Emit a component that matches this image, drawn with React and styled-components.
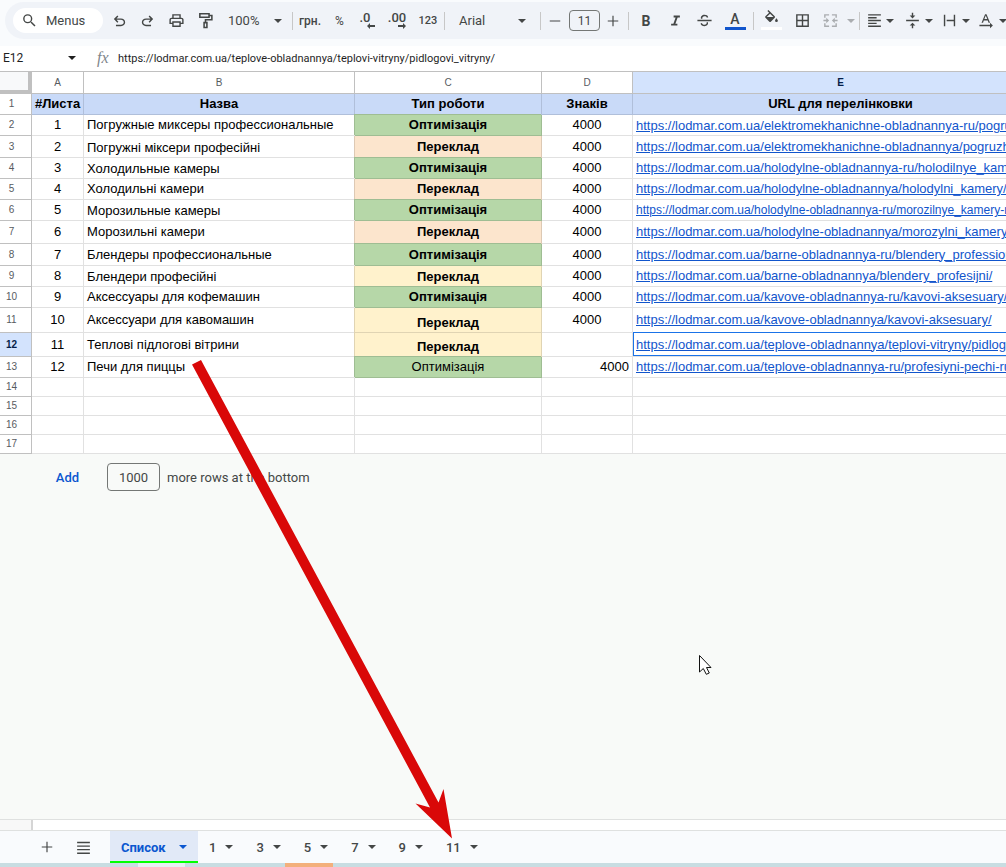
import styled, { createGlobalStyle, css } from 'styled-components';

const GlobalStyle = createGlobalStyle`
  * {
    box-sizing: border-box;
  }

  body {
    margin: 0;
    overflow: hidden;
    background: #f8faf8;
    color: #444746;
    font-family: Roboto, "Liberation Sans", sans-serif;
    font-size: 13px;
  }

  button, input, select {
    font: inherit;
    color: inherit;
  }
`;

const Page = styled.div`
  position: relative;
  display: flex;
  flex-direction: column;
  height: 100vh;
  overflow: hidden;
`;

const ToolbarArea = styled.header`
  padding: 2px 0 7px 5px;
  background: #f9fbfd;
`;

const Toolbar = styled.div`
  display: flex;
  align-items: center;
  height: 37px;
  padding-left: 8px;
  border-radius: 19px 0 0 19px;
  background: #f0f3f8;
  white-space: nowrap;
  overflow: hidden;
`;

const SearchButton = styled.button`
  display: flex;
  align-items: center;
  gap: 8px;
  flex: none;
  width: 90px;
  height: 25px;
  margin-right: 2px;
  padding: 0 0 0 8px;
  border: 0;
  border-radius: 13px;
  background: #fff;
`;

const ToolButton = styled.button`
  display: flex;
  align-items: center;
  justify-content: center;
  flex: none;
  width: ${({ $width }) => $width || 28}px;
  height: 28px;
  padding: 0;
  border: 0;
  background: none;
  font-size: ${({ $size }) => $size || 13}px;
  font-weight: ${({ $weight }) => $weight || 400};
  opacity: ${({ disabled }) => (disabled ? 0.4 : 1)};
`;

const MenuButton = styled(ToolButton)`
  justify-content: space-between;
  padding: 0 ${({ $pad }) => $pad || 4}px;
`;

const Separator = styled.span`
  flex: none;
  width: 1px;
  height: 18px;
  margin: 0 ${({ $gap }) => $gap || 0}px;
  background: #c7c7c7;
`;

const FontSizeInput = styled.input`
  flex: none;
  width: 31px;
  height: 21px;
  padding: 0;
  border: 1px solid #747775;
  border-radius: 4px;
  background: transparent;
  font-size: 12px;
  text-align: center;
`;

const FormulaBar = styled.div`
  display: flex;
  align-items: center;
  height: 25px;
  padding-bottom: 1px;
  background: #fff;
  color: #1f1f1f;
  font-size: 12px;
`;

const NameBox = styled.button`
  display: flex;
  align-items: center;
  justify-content: space-between;
  width: 80px;
  padding: 0 4px 0 3px;
  border: 0;
  background: none;
`;

const FxLabel = styled.span`
  width: 38px;
  padding-left: 17px;
  color: #80868b;
  font: italic 16px "Liberation Serif", serif;
`;

const FormulaInput = styled.input`
  flex: 1;
  padding: 0;
  border: 0;
  background: none;
  font-size: 11px;
`;

const SheetArea = styled.main`
  flex: 1;
  min-height: 0;
  overflow: hidden;
`;

const Sheet = styled.table`
  width: 1049px;
  border-collapse: separate;
  border-spacing: 0;
  border-top: 1px solid #c0c0c0;
  table-layout: fixed;
  background: #fff;
  color: #000;
  font-family: "Liberation Sans", Arial, sans-serif;
`;

const Corner = styled.td`
  padding: 0;
  border-right: 4px solid #c0c0c0;
  border-bottom: 4px solid #c0c0c0;
  background: #f8f9fa;
`;

const headerCell = css`
  padding: 0;
  border-right: 1px solid #c0c0c0;
  border-bottom: 1px solid #c0c0c0;
  background: ${({ $active }) => ($active ? '#d3e3fd' : '#fff')};
  color: ${({ $active }) => ($active ? '#041e49' : '#575b5f')};
  font-size: 10px;
  font-weight: ${({ $active }) => ($active ? 700 : 400)};
  line-height: 12px;
`;

const ColumnHeader = styled.th`
  ${headerCell}
`;

const RowHeader = styled.th`
  ${headerCell}
  padding-right: 8px;
`;

const Row = styled.tr`
  height: ${({ $height }) => $height}px;
`;

const fills = {
  header: { background: '#c9daf8', line: '#b0bfda' },
  green: { background: '#b6d7a8', line: '#9fbd93' },
  peach: { background: '#fce5cd', line: '#ddc9b4' },
  yellow: { background: '#fff2cc', line: '#e0d4b3' },
};

const Cell = styled.td`
  padding: 0 3px ${({ $bottom }) => ($bottom ? 2 : 1)}px;
  overflow: hidden;
  border-right: 1px solid ${({ $fill }) => ($fill ? fills[$fill].line : '#e1e1e1')};
  border-bottom: 1px solid ${({ $fill }) => ($fill ? fills[$fill].line : '#e1e1e1')};
  background: ${({ $fill }) => ($fill ? fills[$fill].background : '#fff')};
  box-shadow: ${({ $fill }) => {
    if (!$fill || $fill === 'header') return 'none';
    return `-1px ${$fill === 'green' ? -1 : 0}px ${fills[$fill].line}`;
  }};
  font-size: ${({ $small }) => ($small ? 12 : 13)}px;
  font-weight: ${({ $bold }) => ($bold ? 700 : 400)};
  line-height: 15px;
  text-align: ${({ $align }) => $align || 'center'};
  vertical-align: ${({ $bottom }) => ($bottom ? 'bottom' : 'middle')};
  white-space: nowrap;

  ${({ $selected }) => $selected && css`
    box-shadow: inset 1px 0 #1a73e8, inset 0 -1px #1a73e8, 0 -1px #1a73e8;
  `}
`;

const CellLink = styled.a`
  color: #1155cc;
  text-decoration: underline;
`;

const AddRows = styled.form`
  display: flex;
  align-items: center;
  height: 46px;
  padding-left: 47px;
`;

const AddButton = styled.button`
  width: 41px;
  margin-right: 19px;
  padding: 0;
  border: 0;
  background: none;
  color: #0b57d0;
  font-weight: 500;
`;

const RowCount = styled.input`
  width: 53px;
  height: 28px;
  margin-right: 7px;
  padding: 0;
  border: 1px solid #747775;
  border-radius: 4px;
  background: transparent;
  text-align: center;
`;

const ScrollTrack = styled.div`
  height: 12px;
  padding-left: 31px;
  border: solid #dfe1e0;
  border-width: 1px 0;
  background: #f8f8f8;

  &::before {
    content: "";
    display: block;
    height: 10px;
    border-left: 2px solid #d5d5d5;
    background: #fff;
  }
`;

const TabBar = styled.nav`
  display: flex;
  align-items: center;
  height: 32px;
  padding-left: 28px;
  background: #f9fbfd;
`;

const Tab = styled.button`
  display: flex;
  align-items: center;
  gap: 9px;
  height: 32px;
  padding: ${({ $active }) => ($active ? '0 11px' : '0 12px 0 11px')};
  border: 0;
  background: ${({ $active }) => ($active ? '#e1e9f7' : 'transparent')};
  color: ${({ $active }) => ($active ? '#0b57d0' : '#444746')};
  font-weight: ${({ $active }) => ($active ? 700 : 500)};
  box-shadow: ${({ $active }) => ($active ? 'inset 0 -2px #00ff00' : 'none')};
`;

const TabName = styled.span`
  min-width: ${({ $active }) => ($active ? 49 : 7)}px;
  text-align: left;
`;

const Taskbar = styled.footer`
  display: flex;
  height: 4px;
  padding-left: 138px;
  background: #c8dde2;
`;

const TaskItem = styled.span`
  width: ${({ $width }) => $width}px;
  margin-right: 100px;
  background: ${({ $color }) => $color};
`;

const Annotation = styled.svg`
  position: absolute;
  left: 0;
  top: 0;
  pointer-events: none;
`;

const Arrow = styled.svg`
  flex: none;
  width: 8px;
  height: 4px;
  fill: currentColor;
`;

function Caret() {
  return <Arrow viewBox="0 0 8 4"><path d="M0 0h8L4 4z" /></Arrow>;
}

const icons = {
  search: <path d="M15.5 14h-.79l-.28-.27A6.47 6.47 0 0 0 16 9.5 6.5 6.5 0 1 0 9.5 16c1.61 0 3.09-.59 4.23-1.57l.27.28v.79l5 4.99L20.49 19zm-6 0a4.5 4.5 0 1 1 0-9 4.5 4.5 0 0 1 0 9z" />,
  undo: <path d="M7 20v-2h7.1c1.05 0 1.96-.33 2.74-1s1.16-1.5 1.16-2.5-.39-1.83-1.16-2.5S15.15 11 14.1 11H7.8l2.6 2.6L9 15l-5-5 5-5 1.4 1.4L7.8 9h6.3c1.62 0 3 .52 4.16 1.57C19.42 11.62 20 12.93 20 14.5s-.58 2.88-1.74 3.93C17.1 19.48 15.72 20 14.1 20z" />,
  redo: <path d="M9.9 20c-1.62 0-3-.52-4.16-1.57C4.58 17.38 4 16.07 4 14.5s.58-2.88 1.74-3.93C6.9 9.52 8.28 9 9.9 9h6.3l-2.6-2.6L15 5l5 5-5 5-1.4-1.4 2.6-2.6H9.9c-1.05 0-1.96.33-2.74 1S6 13.500 6 14.500s.39 1.830 1.160 2.500S8.850 18 9.900 18H17v2z" />,
  print: <path d="M19 8h-1V3H6v5H5c-1.660 0-3 1.340-3 3v6h4v4h12v-4h4v-6c0-1.660-1.340-3-3-3zM8 5h8v3H8zm8 14H8v-4h8zm2-4v-2H6v2H4v-4c0-.55.45-1 1-1h14c.55 0 1 .45 1 1v4z" />,
  paint: <path d="M4 2.500h13v5H4zM17 5h4v6h-9v4M10 15h4v7h-4z" fill="none" stroke="currentColor" strokeWidth="2.200" />,
  strike: <path d="M2 11h20v2H2zM7 9.500C6.200 6.500 8.500 4 12 4c2.700 0 4.500 1.200 5.300 3.300l-1.900.8C14.900 6.700 13.700 6 12 6c-2.200 0-3.400 1.200-3 3.500zM17 14.500c.7 3.200-1.500 5.500-5 5.500-2.900 0-4.900-1.400-5.600-3.800l1.900-.7c.5 1.600 1.800 2.500 3.700 2.500 2.300 0 3.500-1.200 3-3.500z" />,
  italic: <path d="M9 4v3h3.200l-3.600 10H5v3h10v-3h-3.200l3.600-10H19V4z" />,
  fill: <path d="M16.560 8.940 7.620 0 6.210 1.410l2.380 2.380-5.150 5.150a1.490 1.490 0 0 0 0 2.120l5.500 5.500a1.500 1.500 0 0 0 2.120 0l5.500-5.500c.59-.58.59-1.530 0-2.120zM5.210 10 10 5.210 14.790 10zM19 11.500s-2 2.170-2 3.500a2 2 0 1 0 4 0c0-1.330-2-3.500-2-3.500z" />,
  borders: <path d="M3 3v18h18V3zm8 16H5v-6h6zm0-8H5V5h6zm8 8h-6v-6h6zm0-8h-6V5h6z" />,
  merge: <path d="M3 3h7v2H5v3H3zM14 3h7v5h-2V5h-5zM3 16h2v3h5v2H3zM19 16h2v5h-7v-2h5zM2 11h4V8l4 4-4 4v-3H2zM22 11h-4V8l-4 4 4 4v-3h4z" />,
  align: <path d="M3 3h18v2H3zM3 7h12v2H3zM3 11h18v2H3zM3 15h12v2H3zM3 19h18v2H3z" />,
  valign: <path d="M3 11h18v2H3zM11 1h2v4h3l-4 4-4-4h3zM11 23h2v-4h3l-4-4-4 4h3z" />,
  wrap: <path d="M4 4h2v16H4zM18 4h2v16h-2zM8 11h10v2H8z" />,
  rotate: <path d="m10 3-5 12h2.100l1.100-3h5.600l1.100 3H17L12 3zm-1 7 2-5 2 5zM2 18h15v-3l4 4-4 4v-3H2z" />,
  plus: <path d="M11 3h2v8h8v2h-8v8h-2v-8H3v-2h8z" />,
  minus: <path d="M3 11h18v2H3z" />,
  menu: <path d="M3 4h18v2H3zM3 9h18v2H3zM3 14h18v2H3zM3 19h18v2H3z" />,
};

const IconSvg = styled.svg`
  flex: none;
  fill: currentColor;
`;

function Icon({ name, size = 17 }) {
  return <IconSvg width={size} height={size} viewBox="0 0 24 24" aria-hidden="true">{icons[name]}</IconSvg>;
}

const ColorBar = styled.span`
  display: flex;
  flex-direction: column;
  align-items: center;
  justify-content: flex-end;
  width: 21px;
  height: 19px;
  border-bottom: 3px solid ${({ $color }) => $color};
  font-size: 14px;
  font-weight: 500;
  line-height: 16px;
`;

const Decimal = styled.span`
  display: flex;
  flex-direction: column;
  align-items: ${({ $start }) => ($start ? 'flex-start' : 'flex-end')};
  font-weight: 500;
  line-height: 11px;

  svg {
    margin-left: 7px;
    fill: currentColor;
  }
`;

const site = 'https://lodmar.com.ua/';

const rows = [
  { h: 21, n: 1, name: 'Погружные миксеры профессиональные', fill: 'green', url: 'elektromekhanichne-obladnannya-ru/pogruzhnye-miksery/', urlBottom: true },
  { h: 22, n: 2, name: 'Погружні міксери професійні', fill: 'peach', url: 'elektromekhanichne-obladnannya/pogruzhni-miksery/', nameBottom: true },
  { h: 21, n: 3, name: 'Холодильные камеры', fill: 'green', url: 'holodylne-obladnannya-ru/holodilnye_kamery/', nameBottom: true },
  { h: 21, n: 4, name: 'Холодильні камери', fill: 'peach', url: 'holodylne-obladnannya/holodylni_kamery/' },
  { h: 21, n: 5, name: 'Морозильные камеры', fill: 'green', url: 'holodylne-obladnannya-ru/morozilnye_kamery-ru/', nameBottom: true, urlBottom: true, small: true },
  { h: 23, n: 6, name: 'Морозильні камери', fill: 'peach', url: 'holodylne-obladnannya/morozylni_kamery/' },
  { h: 22, n: 7, name: 'Блендеры профессиональные', fill: 'green', url: 'barne-obladnannya-ru/blendery_professionalnye/' },
  { h: 21, n: 8, name: 'Блендери професійні', fill: 'yellow', url: 'barne-obladnannya/blendery_profesijni/', nameBottom: true, typeBottom: true },
  { h: 21, n: 9, name: 'Аксессуары для кофемашин', fill: 'green', url: 'kavove-obladnannya-ru/kavovi-aksesuary/' },
  { h: 25, n: 10, name: 'Аксессуари для кавомашин', fill: 'yellow', url: 'kavove-obladnannya/kavovi-aksesuary/', typeBottom: true },
  { h: 24, n: 11, name: 'Теплові підлогові вітрини', fill: 'yellow', url: 'teplove-obladnannya/teplovi-vitryny/pidlogovi_vitryny/', typeBottom: true, chars: '', selected: true },
  { h: 21, n: 12, name: 'Печи для пиццы', fill: 'green', url: 'teplove-obladnannya-ru/profesiyni-pechi-ru/', charsAlign: 'right', plain: true },
];

const columns = [['A', 52], ['B', 271], ['C', 187], ['D', 91], ['E', 416]];
const titles = ['#Листа', 'Назва', 'Тип роботи', 'Знаків', 'URL для перелінковки'];

function ToolbarItems() {
  return (
    <Toolbar role="toolbar">
      <SearchButton><Icon name="search" />Menus</SearchButton>
      <ToolButton aria-label="Undo"><Icon name="undo" /></ToolButton>
      <ToolButton aria-label="Redo"><Icon name="redo" /></ToolButton>
      <ToolButton aria-label="Print" $width={31}><Icon name="print" /></ToolButton>
      <ToolButton aria-label="Paint format" $width={26}><Icon name="paint" /></ToolButton>
      <MenuButton $width={74} $pad={10}>100%<Caret /></MenuButton>
      <Separator />
      <ToolButton $width={34} $size={12} $weight={500}>грн.</ToolButton>
      <ToolButton $width={25} $size={12}>%</ToolButton>
      <ToolButton $width={30} aria-label="Decrease decimal places">
        <Decimal $start>.0<svg width="8" height="6"><path d="M0 3l3-3v2h5v2H3v2z" /></svg></Decimal>
      </ToolButton>
      <ToolButton $width={30} aria-label="Increase decimal places">
        <Decimal>.00<svg width="8" height="6"><path d="M8 3 5 0v2H0v2h5v2z" /></svg></Decimal>
      </ToolButton>
      <ToolButton $width={32} $size={11} $weight={500}>123</ToolButton>
      <Separator />
      <MenuButton $width={95} $pad={14}>Arial<Caret /></MenuButton>
      <Separator />
      <ToolButton aria-label="Decrease font size"><Icon name="minus" size={14} /></ToolButton>
      <FontSizeInput aria-label="Font size" defaultValue="11" />
      <ToolButton aria-label="Increase font size" $width={26}><Icon name="plus" size={14} /></ToolButton>
      <Separator $gap={2} />
      <ToolButton $width={30} $size={14} $weight={700}>B</ToolButton>
      <ToolButton aria-label="Italic"><Icon name="italic" size={15} /></ToolButton>
      <ToolButton $width={30} aria-label="Strikethrough"><Icon name="strike" /></ToolButton>
      <ToolButton $width={32}><ColorBar $color="#1155cc">A</ColorBar></ToolButton>
      <Separator $gap={2} />
      <ToolButton $width={30} aria-label="Fill color"><ColorBar $color="#fff"><Icon name="fill" /></ColorBar></ToolButton>
      <ToolButton $width={32} aria-label="Borders"><Icon name="borders" /></ToolButton>
      <MenuButton $width={41} disabled aria-label="Merge cells"><Icon name="merge" /><Caret /></MenuButton>
      <Separator />
      <MenuButton $width={40} $pad={6} aria-label="Horizontal align"><Icon name="align" /><Caret /></MenuButton>
      <MenuButton $width={37} aria-label="Vertical align"><Icon name="valign" /><Caret /></MenuButton>
      <MenuButton $width={37} aria-label="Text wrapping"><Icon name="wrap" /><Caret /></MenuButton>
      <MenuButton $width={37} aria-label="Text rotation"><Icon name="rotate" /><Caret /></MenuButton>
    </Toolbar>
  );
}

function SheetRow({ row, index }) {
  return (
    <Row $height={row.h}>
      <RowHeader scope="row" $active={row.selected}>{index}</RowHeader>
      <Cell>{row.n}</Cell>
      <Cell $align="left" $bottom={row.nameBottom}>{row.name}</Cell>
      <Cell $fill={row.fill} $bold={!row.plain} $bottom={row.typeBottom}>
        {row.fill === 'green' ? 'Оптимізація' : 'Переклад'}
      </Cell>
      <Cell $align={row.charsAlign}>{row.chars ?? '4000'}</Cell>
      <Cell $align="left" $bottom={row.urlBottom} $small={row.small} $selected={row.selected}>
        <CellLink href={site + row.url}>{site + row.url}</CellLink>
      </Cell>
    </Row>
  );
}

function App() {
  return (
    <Page>
      <GlobalStyle />
      <ToolbarArea><ToolbarItems /></ToolbarArea>
      <FormulaBar>
        <NameBox>E12<Caret /></NameBox>
        <FxLabel>fx</FxLabel>
        <FormulaInput aria-label="Formula" defaultValue="https://lodmar.com.ua/teplove-obladnannya/teplovi-vitryny/pidlogovi_vitryny/" />
      </FormulaBar>
      <SheetArea>
        <Sheet>
          <colgroup>
            <col width="32" />
            {columns.map(([letter, width]) => <col key={letter} width={width} />)}
          </colgroup>
          <thead>
            <Row $height={22}>
              <Corner />
              {columns.map(([letter]) => (
                <ColumnHeader key={letter} scope="col" $active={letter === 'E'}>{letter}</ColumnHeader>
              ))}
            </Row>
          </thead>
          <tbody>
            <Row $height={21}>
              <RowHeader scope="row">1</RowHeader>
              {titles.map((title) => <Cell key={title} $fill="header" $bold>{title}</Cell>)}
            </Row>
            {rows.map((row, i) => <SheetRow key={row.n} row={row} index={i + 2} />)}
            {[14, 15, 16, 17].map((index) => (
              <Row key={index} $height={19}>
                <RowHeader scope="row">{index}</RowHeader>
                {columns.map(([letter]) => <Cell key={letter} />)}
              </Row>
            ))}
          </tbody>
        </Sheet>
        <AddRows onSubmit={(e) => e.preventDefault()}>
          <AddButton>Add</AddButton>
          <RowCount id="row-count" defaultValue="1000" />
          <label htmlFor="row-count">more rows at the bottom</label>
        </AddRows>
      </SheetArea>
      <ScrollTrack />
      <TabBar>
        <ToolButton $width={37} aria-label="Add sheet"><Icon name="plus" size={14} /></ToolButton>
        <ToolButton $width={36} aria-label="All sheets"><Icon name="menu" /></ToolButton>
        <Separator $gap={4} style={{ visibility: 'hidden' }} />
        <Tab $active><TabName $active>Список</TabName><Caret /></Tab>
        {[1, 3, 5, 7, 9, 11].map((name) => <Tab key={name}><TabName>{name}</TabName><Caret /></Tab>)}
      </TabBar>
      <Taskbar>
        <TaskItem $width={47} $color="#e6f0f3" />
        <TaskItem $width={48} $color="#f3b07c" />
      </Taskbar>
      {/* pointer from the row to its sheet tab */}
      <Annotation width="720" height="850" viewBox="0 0 720 850">
        <path d="M192 364.500 201 360 438.500 802.500 443.500 789 452 838.500 415.500 803.500 430 807.500z" fill="#d90808" />
        <path d="M699.500 655.500v16.500l3.800-3.500 3 5.800 3-1.300-2.800-5.500h4.500z" fill="#fff" stroke="#111" />
      </Annotation>
    </Page>
  );
}

export default App;
